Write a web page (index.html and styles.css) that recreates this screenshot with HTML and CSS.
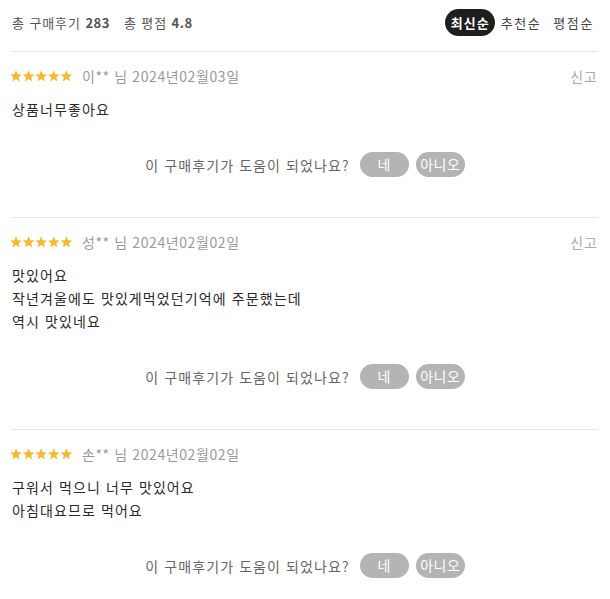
FILE: index.html
```html
<!DOCTYPE html>
<html lang="ko">
<head>
<meta charset="utf-8">
<link rel="stylesheet" href="styles.css">
</head>
<body>
<div class="wrap">
  <div class="head">
    <div class="summary">총 구매후기 <b>283</b><span class="sp"></span>총 평점 <b>4.8</b></div>
    <div class="sort">
      <span class="sbtn active">최신순</span>
      <span class="sbtn">추천순</span>
      <span class="sbtn">평점순</span>
    </div>
  </div>

  <div class="review">
    <div class="meta">
      <span class="stars">
        <svg viewBox="0 0 63 12" width="63" height="12"><defs><polygon id="st" points="6,0.3 7.6,4.2 11.8,4.5 8.6,7.2 9.6,11.4 6,9.1 2.4,11.4 3.4,7.2 0.2,4.5 4.4,4.2"/></defs><use href="#st" x="0"/><use href="#st" x="12.6"/><use href="#st" x="25.2"/><use href="#st" x="37.8"/><use href="#st" x="50.4"/></svg>
      </span>
      <span class="who">이** 님 2024년02월03일</span>
      <span class="report">신고</span>
    </div>
    <div class="body">상품너무좋아요</div>
    <div class="helpful">
      <span class="q">이 구매후기가 도움이 되었나요?</span>
      <span class="hbtn">네</span>
      <span class="hbtn">아니오</span>
    </div>
  </div>

  <div class="review">
    <div class="meta">
      <span class="stars">
        <svg viewBox="0 0 63 12" width="63" height="12"><use href="#st" x="0"/><use href="#st" x="12.6"/><use href="#st" x="25.2"/><use href="#st" x="37.8"/><use href="#st" x="50.4"/></svg>
      </span>
      <span class="who">성** 님 2024년02월02일</span>
      <span class="report">신고</span>
    </div>
    <div class="body">맛있어요<br>작년겨울에도 맛있게먹었던기억에 주문했는데<br>역시 맛있네요</div>
    <div class="helpful">
      <span class="q">이 구매후기가 도움이 되었나요?</span>
      <span class="hbtn">네</span>
      <span class="hbtn">아니오</span>
    </div>
  </div>

  <div class="review">
    <div class="meta">
      <span class="stars">
        <svg viewBox="0 0 63 12" width="63" height="12"><use href="#st" x="0"/><use href="#st" x="12.6"/><use href="#st" x="25.2"/><use href="#st" x="37.8"/><use href="#st" x="50.4"/></svg>
      </span>
      <span class="who">손** 님 2024년02월02일</span>
    </div>
    <div class="body">구워서 먹으니 너무 맛있어요<br>아침대요므로 먹어요</div>
    <div class="helpful">
      <span class="q">이 구매후기가 도움이 되었나요?</span>
      <span class="hbtn">네</span>
      <span class="hbtn">아니오</span>
    </div>
  </div>
</div>
</body>
</html>
```

FILE: styles.css
```css
* { box-sizing: border-box; }
html, body { margin: 0; padding: 0; background: #fff; }
body {
  font-family: "Noto Sans CJK KR", "Noto Sans", sans-serif;
  color: #333;
  font-size: 14px;
}
.wrap { padding: 0 12px; }
.head {
  display: flex;
  justify-content: space-between;
  align-items: center;
  padding: 9px 0 15px;
  border-bottom: 1px solid #e6e6e6;
}
.summary {
  font-size: 13px;
  color: #555;
  line-height: 27px;
  letter-spacing: 0.9px;
}
.summary b { font-weight: 700; color: #555; letter-spacing: 0.5px; }
.summary .sp { display: inline-block; width: 14px; }
.sort { display: flex; align-items: center; margin-right: -2px; }
.sbtn {
  font-size: 13px;
  line-height: 27px;
  height: 27px;
  padding: 0 6px;
  color: #444;
  letter-spacing: 1.6px;
}
.sbtn.active {
  background: #1e1e1e;
  color: #fff;
  font-weight: 700;
  border-radius: 14px;
  padding: 0 5px 0 6px;
  letter-spacing: 1px;
}
.review {
  padding: 14px 0 40px;
  border-bottom: 1px solid #e6e6e6;
}
.review:last-child { border-bottom: none; }
.meta {
  display: flex;
  align-items: center;
  height: 20px;
}
.stars { display: flex; margin-left: -2px; margin-right: 9px; }
.stars svg { fill: #f5b932; display: block; }
.who { color: #999; font-size: 14px; letter-spacing: 0.6px; }
.report { margin-left: auto; color: #aaa; font-size: 14px; letter-spacing: 1px; }
.body {
  margin-top: 12px;
  line-height: 23px;
  color: #2a2a2a;
  font-size: 14px;
  letter-spacing: 1.1px;
}
.helpful {
  margin-top: 31px;
  display: flex;
  justify-content: center;
  align-items: center;
  gap: 7px;
}
.helpful .q { color: #666; font-size: 14px; margin-right: 3px; letter-spacing: 1.1px; }
.hbtn {
  width: 49px;
  height: 25px;
  line-height: 25px;
  border-radius: 13px;
  background: #b4b4b4;
  color: #fff;
  text-align: center;
  font-size: 14px;
  letter-spacing: 0.5px;
}
```
